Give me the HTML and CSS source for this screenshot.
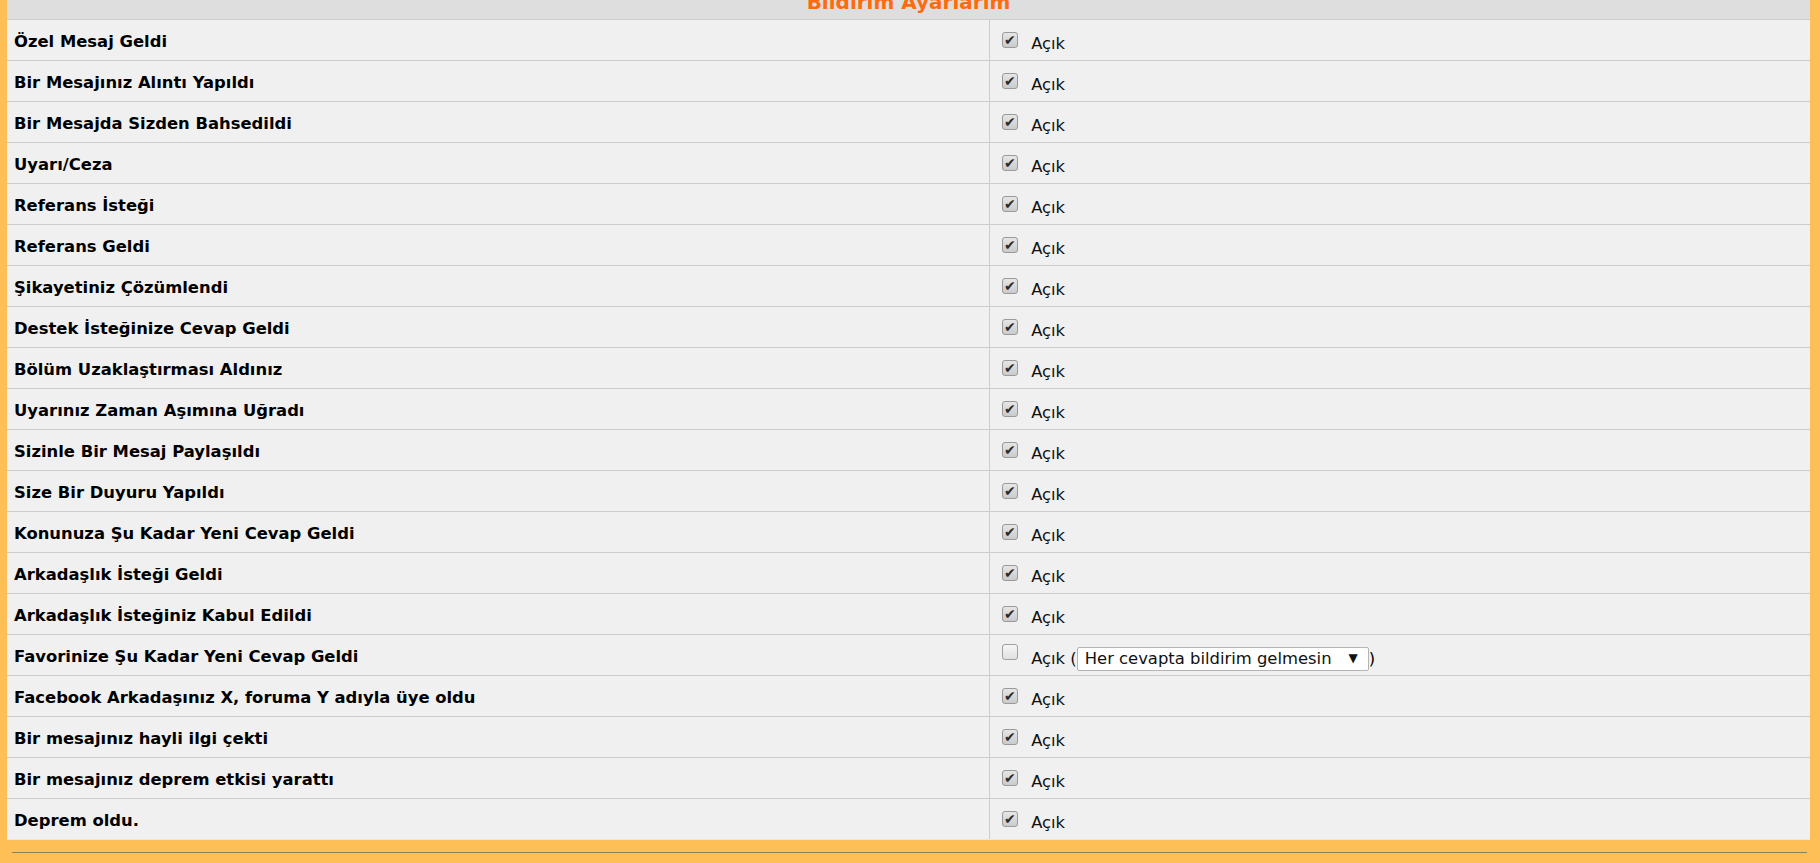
FILE: index.html
```html
<!DOCTYPE html>
<html lang="tr">
<head>
  <meta charset="UTF-8">
  <title>Bildirim Ayarlarım</title>
  <link rel="stylesheet" href="styles.css">
</head>
<body>
  <div id="sayfa">
    <table id="ayarlar">
      <tr>
        <th colspan="2" class="baslik">Bildirim Ayarlarım</th>
      </tr>
      <tr><td class="ad">Özel Mesaj Geldi</td><td class="deger"><input type="checkbox" checked><label>Açık</label></td></tr>
      <tr><td class="ad">Bir Mesajınız Alıntı Yapıldı</td><td class="deger"><input type="checkbox" checked><label>Açık</label></td></tr>
      <tr><td class="ad">Bir Mesajda Sizden Bahsedildi</td><td class="deger"><input type="checkbox" checked><label>Açık</label></td></tr>
      <tr><td class="ad">Uyarı/Ceza</td><td class="deger"><input type="checkbox" checked><label>Açık</label></td></tr>
      <tr><td class="ad">Referans İsteği</td><td class="deger"><input type="checkbox" checked><label>Açık</label></td></tr>
      <tr><td class="ad">Referans Geldi</td><td class="deger"><input type="checkbox" checked><label>Açık</label></td></tr>
      <tr><td class="ad">Şikayetiniz Çözümlendi</td><td class="deger"><input type="checkbox" checked><label>Açık</label></td></tr>
      <tr><td class="ad">Destek İsteğinize Cevap Geldi</td><td class="deger"><input type="checkbox" checked><label>Açık</label></td></tr>
      <tr><td class="ad">Bölüm Uzaklaştırması Aldınız</td><td class="deger"><input type="checkbox" checked><label>Açık</label></td></tr>
      <tr><td class="ad">Uyarınız Zaman Aşımına Uğradı</td><td class="deger"><input type="checkbox" checked><label>Açık</label></td></tr>
      <tr><td class="ad">Sizinle Bir Mesaj Paylaşıldı</td><td class="deger"><input type="checkbox" checked><label>Açık</label></td></tr>
      <tr><td class="ad">Size Bir Duyuru Yapıldı</td><td class="deger"><input type="checkbox" checked><label>Açık</label></td></tr>
      <tr><td class="ad">Konunuza Şu Kadar Yeni Cevap Geldi</td><td class="deger"><input type="checkbox" checked><label>Açık</label></td></tr>
      <tr><td class="ad">Arkadaşlık İsteği Geldi</td><td class="deger"><input type="checkbox" checked><label>Açık</label></td></tr>
      <tr><td class="ad">Arkadaşlık İsteğiniz Kabul Edildi</td><td class="deger"><input type="checkbox" checked><label>Açık</label></td></tr>
      <tr>
        <td class="ad">Favorinize Şu Kadar Yeni Cevap Geldi</td>
        <td class="deger"><input type="checkbox"><label>Açık (</label><span class="secim"><select><option>Her cevapta bildirim gelmesin</option></select></span>)</td>
      </tr>
      <tr><td class="ad">Facebook Arkadaşınız X, foruma Y adıyla üye oldu</td><td class="deger"><input type="checkbox" checked><label>Açık</label></td></tr>
      <tr><td class="ad">Bir mesajınız hayli ilgi çekti</td><td class="deger"><input type="checkbox" checked><label>Açık</label></td></tr>
      <tr><td class="ad">Bir mesajınız deprem etkisi yarattı</td><td class="deger"><input type="checkbox" checked><label>Açık</label></td></tr>
      <tr><td class="ad">Deprem oldu.</td><td class="deger"><input type="checkbox" checked><label>Açık</label></td></tr>
    </table>
    <hr>
  </div>
</body>
</html>
```

FILE: styles.css
```css
html, body {
  margin: 0;
  padding: 0;
  height: 100vh;
  overflow: hidden;
  background: #ffbf57;
  font-family: "DejaVu Sans", Verdana, sans-serif;
}

/* sayfa biraz asagi kaydirilmis gibi */
#sayfa {
  margin-top: -14px;
  padding: 0 10px 0 7px;
}

#ayarlar {
  width: 100%;
  border-collapse: collapse;
  background: #f0f0f0;
}

.baslik {
  background: #dedede;
  color: #ff6a0d;
  font-size: 20px;
  line-height: 24px;
  padding: 4px 0 5px 0;
  border-bottom: 1px solid #cccccc;
}

#ayarlar td {
  height: 41px;
  padding: 3px 7px 0 7px;
  border-bottom: 1px solid #cccccc;
  box-sizing: border-box;
  font-size: 16.4px;
  color: #000;
}

#ayarlar tr:last-child td {
  border-bottom: 1px solid #e6e8ee;
}

.ad {
  width: 54.5%;
  font-weight: bold;
  border-right: 1px solid #cccccc;
}

.deger {
  padding-top: 5px !important;
}

.deger label {
  color: #111;
}

.deger input[type="checkbox"] {
  appearance: none;
  width: 16px;
  height: 16px;
  box-sizing: border-box;
  margin: 0 13px 0 5px;
  border: 1px solid #a0a0a0;
  border-radius: 3px;
  background: linear-gradient(#f6f6f6, #e0e0e0);
  display: inline-grid;
  place-items: center;
  vertical-align: 4px;
}

.deger input[type="checkbox"]:checked {
  background: linear-gradient(#e6e6e6, #cbcbcb);
  border-color: #9a9a9a;
}

.deger input[type="checkbox"]:checked::after {
  content: "\2714";
  font-size: 14px;
  line-height: 14px;
  color: #2a2a2a;
}

.secim {
  position: relative;
  display: inline-block;
}

.secim select {
  appearance: none;
  width: 292px;
  height: 24px;
  padding: 0 0 0 7px;
  border: 1px solid #b5b5b5;
  border-radius: 2px;
  background: #fff;
  font-family: "DejaVu Sans", Verdana, sans-serif;
  font-size: 16.4px;
  color: #111;
}

.secim::after {
  content: "\25BC";
  position: absolute;
  right: 11px;
  top: 4px;
  font-size: 12px;
  color: #111;
  pointer-events: none;
}

hr {
  margin: 12px 3px 0 5px;
  border: 0;
  border-top: 1px solid #8e7d5d;
}
```
